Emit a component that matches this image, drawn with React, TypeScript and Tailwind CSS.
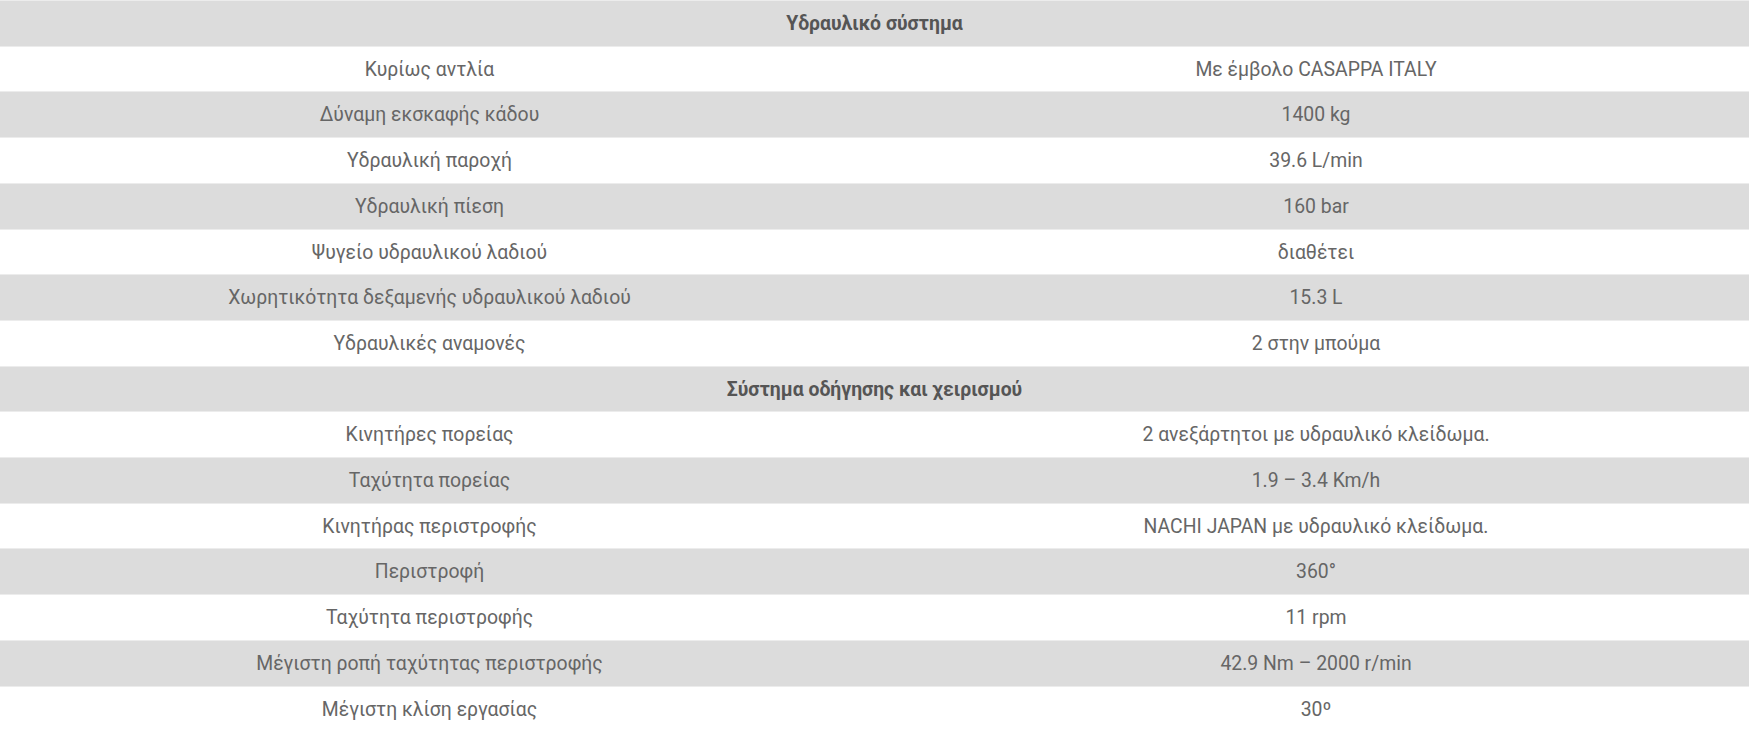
const rows: { type: "head" | "row"; label: string; value?: string }[] = [
  { type: "head", label: "Υδραυλικό σύστημα" },
  { type: "row", label: "Κυρίως αντλία", value: "Με έμβολο CASAPPA ITALY" },
  { type: "row", label: "Δύναμη εκσκαφής κάδου", value: "1400 kg" },
  { type: "row", label: "Υδραυλική παροχή", value: "39.6 L/min" },
  { type: "row", label: "Υδραυλική πίεση", value: "160 bar" },
  { type: "row", label: "Ψυγείο υδραυλικού λαδιού", value: "διαθέτει" },
  { type: "row", label: "Χωρητικότητα δεξαμενής υδραυλικού λαδιού", value: "15.3 L" },
  { type: "row", label: "Υδραυλικές αναμονές", value: "2 στην μπούμα" },
  { type: "head", label: "Σύστημα οδήγησης και χειρισμού" },
  { type: "row", label: "Κινητήρες πορείας", value: "2 ανεξάρτητοι με υδραυλικό κλείδωμα." },
  { type: "row", label: "Ταχύτητα πορείας", value: "1.9 – 3.4 Km/h" },
  { type: "row", label: "Κινητήρας περιστροφής", value: "NACHI JAPAN με υδραυλικό κλείδωμα." },
  { type: "row", label: "Περιστροφή", value: "360°" },
  { type: "row", label: "Ταχύτητα περιστροφής", value: "11 rpm" },
  { type: "row", label: "Μέγιστη ροπή ταχύτητας περιστροφής", value: "42.9 Nm – 2000 r/min" },
  { type: "row", label: "Μέγιστη κλίση εργασίας", value: "30º" },
];

export default function App() {
  return (
    <div className="w-full bg-white font-['Roboto',sans-serif] text-[19.4px] text-[#666]">
      {rows.map((r, i) => {
        const bg = i % 2 === 0 ? "bg-[#dcdcdc]" : "bg-white";
        if (r.type === "head") {
          return (
            <div
              key={i}
              className={`${bg} border-t border-[#ececec] pt-[10px] pb-[9px] text-center font-bold leading-[25.7px] text-[#555]`}
            >
              {r.label}
            </div>
          );
        }
        return (
          <div key={i} className={`${bg} grid grid-cols-[859px_1fr] border-t border-[#ececec] leading-[25.7px]`}>
            <div className="pt-[10px] pb-[9px] text-center">{r.label}</div>
            <div className="pt-[10px] pb-[9px] pl-[24px] text-center">{r.value}</div>
          </div>
        );
      })}
    </div>
  );
}
